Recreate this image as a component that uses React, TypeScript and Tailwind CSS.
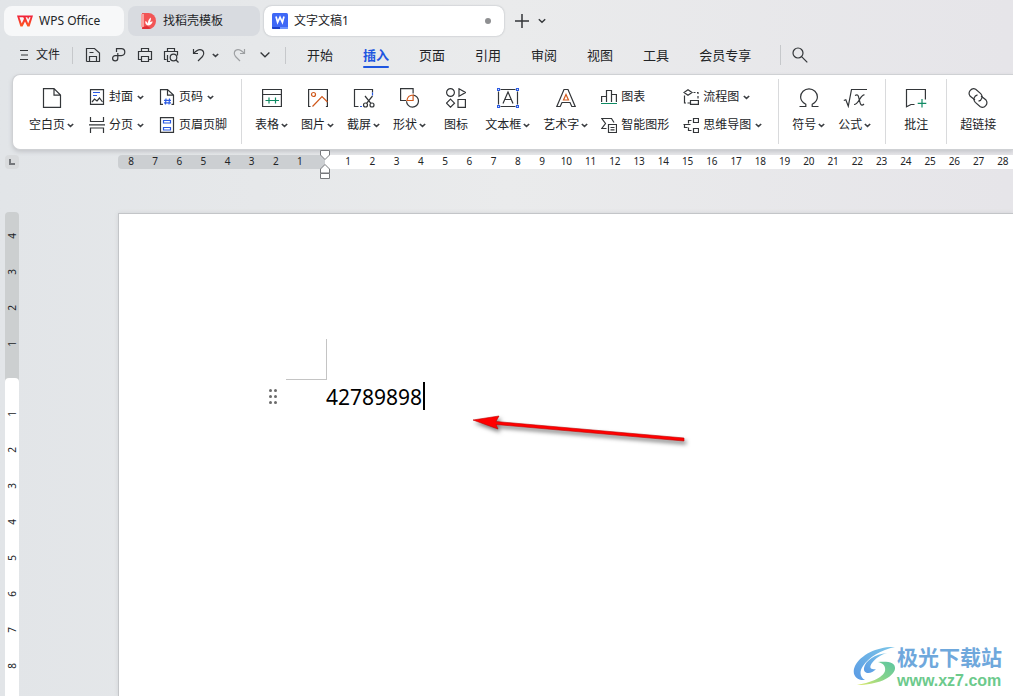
import type { ReactNode } from 'react'

const INK = '#333639'
const BLUE = '#2b5be3'
const GREEN = '#0f8a63'
const ORANGE = '#d0591c'

interface IconProps {
  w?: number
  h?: number
  children: ReactNode
}

// line icons share one stroke setup, drawn on the pixel grid
function Icon({ w = 20, h = 20, children }: IconProps) {
  return (
    <svg width={w} height={h} viewBox={`0 0 ${w} ${h}`} fill="none" stroke={INK} strokeWidth="1.2" className="shrink-0" aria-hidden="true">
      {children}
    </svg>
  )
}

function Caret() {
  return (
    <svg width="7" height="6" viewBox="0 0 7 6" fill="none" stroke="#3c3f43" strokeWidth="1.600" className="shrink-0" aria-hidden="true">
      <path d="M.8 2l2.700 2.400L6.200 2" />
    </svg>
  )
}

function BigButton({ label, icon, menu = false, className = '' }: { label: string; icon: ReactNode; menu?: boolean; className?: string }) {
  return (
    <button className={`flex shrink-0 flex-col items-center gap-2 pt-3 ${className}`}>
      <span className="flex h-[22px] items-center">{icon}</span>
      <span className="flex h-4 items-center gap-0.5 whitespace-nowrap text-xs leading-4">
        {label}
        {menu && <Caret />}
      </span>
    </button>
  )
}

function SmallButton({ label, icon, menu = false }: { label: string; icon: ReactNode; menu?: boolean }) {
  return (
    <button className="flex h-4 items-center gap-1 whitespace-nowrap text-xs leading-4">
      {icon}
      {label}
      {menu && <Caret />}
    </button>
  )
}

function Stack({ children }: { children: ReactNode }) {
  return <div className="flex shrink-0 flex-col items-start gap-3 pt-3.5">{children}</div>
}

function Divider() {
  return <div className="mt-1 h-[65px] w-px shrink-0 bg-[#d9dadc]" />
}

function TabBar() {
  return (
    <header className="flex items-center gap-1 px-1 pt-1.5">
      <button className="flex h-[30px] w-[120px] shrink-0 items-center gap-1.5 rounded-lg bg-[#f7f8f9] pl-[13px] text-xs">
        <svg width="16" height="12" viewBox="0 0 16 12" aria-hidden="true">
          <defs>
            <linearGradient id="wps" x1="0" y1="0" x2="0" y2="1">
              <stop offset="0" stopColor="#f0203c" />
              <stop offset="1" stopColor="#ff5a1f" />
            </linearGradient>
          </defs>
          <path d="M0 .5h16l-3.4 11h-2.2L8 6.4l-2.4 5.1H3.4zM2.4 2.3l2.3 6.1 2.3-4.6-.8-1.5zM8.6 2.3l2.6 6.1 2.4-6.1h-1.5l-.9 2.3-1-2.3z" fill="url(#wps)" fillRule="evenodd" />
        </svg>
        WPS Office
      </button>
      <button className="flex h-[30px] w-[132px] shrink-0 items-center gap-[7px] rounded-lg bg-[#d8dbe0] pl-[13px] text-xs">
        <svg width="15" height="16" viewBox="0 0 15 16" aria-hidden="true">
          <path d="M1 0h6.5a7.5 8 0 0 1 0 16H1z" fill="#f25555" />
          <path d="M0 1h3v13H0z" fill="#f9a3a0" />
          <path d="M2 14l4-1 4 2.500-3 .5H1z" fill="#e02f36" />
          <path d="M7 12.500C4.500 11.800 4 9.800 4.400 8c1.400.7 2.200 1.700 2.400 2.800C6.800 8 7.800 5.800 9.800 4.400c.4 1.800-.2 3.500-1.100 4.800.9-.6 1.900-.8 3-.7-.5 2.200-2.200 3.900-4.700 4z" fill="#fff" />
        </svg>
        找稻壳模板
      </button>
      <div className="flex h-[30px] w-60 shrink-0 items-center gap-1.5 rounded-lg bg-white px-2 text-xs shadow-[0_0_2px_#a8acb2]">
        <svg width="16" height="16" viewBox="0 0 16 16" aria-hidden="true">
          <rect width="16" height="16" rx="1.500" fill="#3f68f6" />
          <path d="M0 14h8v2H1.500A1.500 1.500 0 0 1 0 14z" fill="#1c40c9" />
          <path d="M8 14h8a1.500 1.500 0 0 1-1.500 2H8z" fill="#6c92ff" />
          <path d="M4 3.500l1.600 5.800L8 4.200l2.400 5.100L12 3.500" fill="none" stroke="#fff" strokeWidth="1.700" />
        </svg>
        文字文稿1
        <span className="mr-[5px] ml-auto size-1.5 rounded-full bg-[#8e8f91]" />
      </div>
      <button aria-label="新建标签" className="ml-[7px]">
        <Icon w={14} h={14}><path d="M7 0v14M0 7h14" strokeWidth="1.500" /></Icon>
      </button>
      <button aria-label="标签列表" className="ml-[5px]">
        <Icon w={8} h={6}><path d="M.8 1.200L4 4.200l3.200-3" strokeWidth="1.400" /></Icon>
      </button>
    </header>
  )
}

const menus = ['开始', '插入', '页面', '引用', '审阅', '视图', '工具', '会员专享']

function MenuBar() {
  return (
    <nav className="flex h-[38px] items-center pl-5">
      <button className="flex shrink-0 items-center gap-2 text-xs">
        <Icon w={8} h={12}><path d="M0 1.500h8M1 6h7M0 10.500h8" /></Icon>
        文件
      </button>
      <div className="mx-3 h-[17px] w-px shrink-0 bg-[#c6c8cb]" />
      <div className="flex shrink-0 items-center gap-2.5">
        <button aria-label="保存">
          <Icon w={16} h={16}>
            <path d="M1.500 14.500v-13h8l5 4.500v8.500h-3M1.500 14.500h3M4.500 14.500v-5h7v5h-7M4.500 5.500h4" />
          </Icon>
        </button>
        <button aria-label="输出为PDF">
          <Icon w={16} h={16}>
            <path d="M5.500 5V1.600h4.800a3.500 3.500 0 0 1 0 7H4.200a2.600 2.600 0 1 0 2.600 2.600V6" />
          </Icon>
        </button>
        <button aria-label="打印">
          <Icon w={16} h={16}>
            <path d="M4.500 4.500v-3h7v3M4.500 12.500h-3v-8h13v8h-3M4.500 9.500h7v5h-7z" />
          </Icon>
        </button>
        <button aria-label="打印预览">
          <Icon w={16} h={16}>
            <path d="M4.500 4.500v-3h7v3M3.500 12.500h-2v-8h13v4M4.500 8v6.500H7" />
            <circle cx="10.500" cy="10.500" r="3.300" />
            <path d="M13 13l2.500 2.500" />
          </Icon>
        </button>
        <button aria-label="撤销" className="flex items-center gap-1.5 pl-[3px]">
          <Icon w={14} h={16}>
            <path d="M1.500 2v4.500h4.500M1.700 6.300C4 3.800 6 2.600 8 2.600c3.600 0 5 3.900 2.500 6.900L6 14" />
          </Icon>
          <Caret />
        </button>
        <button aria-label="恢复" className="ml-[3px] opacity-40">
          <Icon w={14} h={16}>
            <path d="M12.500 2v4.500H8M12.300 6.300C10 3.800 8 2.600 6 2.600c-3.600 0-5 3.900-2.500 6.900L8 14" />
          </Icon>
        </button>
        <button aria-label="自定义快速访问" className="ml-1">
          <Icon w={10} h={8}><path d="M.6 1.500L5 5.800l4.400-4.300" strokeWidth="1.300" /></Icon>
        </button>
      </div>
      <div className="mr-[21px] ml-[15px] h-[17px] w-px shrink-0 bg-[#c6c8cb]" />
      <div className="flex shrink-0 gap-[30px] text-[13px] leading-5">
        {menus.map((m) => (
          <button
            key={m}
            className={m === '插入' ? 'flex h-[26px] flex-col justify-between pt-[3px] font-bold text-[#1f56e0]' : 'h-[26px]'}
          >
            {m}
            {m === '插入' && <span className="h-0.5 w-full shrink-0 rounded-full bg-[#1f56e0]" />}
          </button>
        ))}
      </div>
      <div className="mr-[11px] ml-[29px] h-5 w-px shrink-0 bg-[#c6c8cb]" />
      <button aria-label="搜索">
        <Icon w={16} h={16}>
          <circle cx="6" cy="6" r="5" />
          <path d="M9.600 9.600L15.300 15.300" />
        </Icon>
      </button>
    </nav>
  )
}

function Ribbon() {
  return (
    <section className="ml-3 flex h-[76px] overflow-hidden rounded-l-lg border border-r-0 border-[#cfd1d4] bg-white shadow-[0_2px_4px_#c4c6ca]">
      <div className="flex shrink-0 gap-[15px] pr-3.5 pl-4">
        <BigButton
          label="空白页"
          menu
          icon={<Icon><path d="M1.500.6h10.500l6.500 6.500v12.300h-17zM12 .6v6.500h6.500" /></Icon>}
        />
        <Stack>
          <SmallButton
            label="封面"
            menu
            icon={
              <Icon w={16} h={16}>
                <path d="M1.500.6h13v14.800h-13z" />
                <path d="M4 3.500h7M4 6.500h4" stroke={BLUE} />
                <path d="M3 13l2.500-3L8 12l2.500-3 3 4" />
              </Icon>
            }
          />
          <SmallButton
            label="分页"
            menu
            icon={<Icon w={16} h={16}><path d="M1.500 0v4.500h13V0M1.500 16v-5h13v5M0 7.800h16" /></Icon>}
          />
        </Stack>
        <Stack>
          <SmallButton
            label="页码"
            menu
            icon={
              <Icon w={16} h={16}>
                <path d="M4 15.400H1.500V.6h7l6 5.500v9.300h-2M8.500.6v5.500h6" />
                <path d="M7 9.500l-.5 6M10.500 9.500l-.5 6M5 11.300h7M5 13.800h7" stroke={BLUE} />
              </Icon>
            }
          />
          <SmallButton
            label="页眉页脚"
            icon={
              <Icon w={16} h={16}>
                <path d="M1.500.6h13v14.800h-13z" />
                <path d="M4.500 3.500h7v2.500h-7zM4.500 10.500h7v2.500h-7z" stroke={BLUE} />
              </Icon>
            }
          />
        </Stack>
      </div>
      <Divider />
      <div className="flex shrink-0 gap-[13px] pr-4 pl-[13px]">
        <BigButton
          label="表格"
          menu
          icon={
            <Icon>
              <path d="M.6 1.500h18.800v17H.6zM.6 6.500h18.800" />
              <path d="M3.500 12.500h13.500M7 9.500v6M13.500 9.500v6" stroke={GREEN} />
            </Icon>
          }
        />
        <BigButton
          label="图片"
          menu
          icon={
            <Icon>
              <path d="M2.500 18.500H.6v-17h18.800v17h-1.500" />
              <circle cx="5.500" cy="6.500" r="2" stroke={ORANGE} />
              <path d="M4.500 18.500L14 8.500l5.500 5.500" stroke={ORANGE} />
            </Icon>
          }
        />
        <BigButton
          label="截屏"
          menu
          icon={
            <Icon w={22}>
              <path d="M5.500 18.500H1.500v-17h18v3" />
              <path d="M19.500 4.500v3M7 18.500h2" stroke={BLUE} />
              <circle cx="12.500" cy="17" r="2" />
              <circle cx="19" cy="17" r="2" />
              <path d="M12 8l5.900 7.300M19.500 8l-5.900 7.300" />
            </Icon>
          }
        />
        <BigButton
          label="形状"
          menu
          icon={
            <Icon>
              <path d="M6 12.500H.6V.6h12.500v4.900" />
              <path d="M13.100 7.100a6 6 0 1 1-6.600 6.200" />
              <path d="M6.900 12.500a6.500 6.500 0 0 1 6.200-5.500v5.500z" stroke={ORANGE} />
            </Icon>
          }
        />
        <BigButton
          label="图标"
          className="pr-1 pl-[5px]"
          icon={
            <Icon>
              <circle cx="4.500" cy="4.500" r="3.900" />
              <path d="M13 .8v7.400l6.500-3.700zM4.500 11.200l4 4-4 4-4-4zM12 11.500h7.400v7.900H12z" />
            </Icon>
          }
        />
        <BigButton
          label="文本框"
          menu
          icon={
            <Icon w={22} h={20}>
              <path d="M3.500 1.500h15M3.500 18.500h15M1.500 3.500v13M20.500 3.500v13" />
              <path d="M6 15.500L11 4l5 11.500M7.700 11.500h6.600" />
              <path d="M.5.500h2v2h-2zM19.500.500h2v2h-2zM.5 17.500h2v2h-2zM19.500 17.500h2v2h-2z" fill="#fff" stroke={BLUE} />
            </Icon>
          }
        />
        <BigButton
          label="艺术字"
          menu
          icon={
            <Icon>
              <path d="M.8 18.500L8 1.500h4l7.200 17h-3.400L14 14.500H6l-1.800 4z" />
              <path d="M10 6.500l2.500 5.500h-5z" stroke={ORANGE} />
            </Icon>
          }
        />
        <div className="flex shrink-0 gap-3.5">
          <Stack>
            <SmallButton
              label="图表"
              icon={
                <Icon w={16} h={16}>
                  <path d="M.6 13V7.500h4.900M5.500 13V1.500h5V13M10.500 5.500h4.900V13" />
                  <path d="M0 14.500h16" stroke={GREEN} />
                </Icon>
              }
            />
            <SmallButton
              label="智能图形"
              icon={
                <Icon w={16} h={16}>
                  <path d="M5.500 11.500H.8l3.700-5-3.700-5h9.700l2.500 4M7.500 7.500h8v8h-8zM9.500 10.500h4M9.500 12.800h4" />
                </Icon>
              }
            />
          </Stack>
          <Stack>
            <SmallButton
              label="流程图"
              menu
              icon={
                <Icon w={16} h={16}>
                  <path d="M5 .8l4 2.700-4 2.700-4-2.700zM10.500 3.500h2M14 3.500h1v1.500M15 7v2.500M1.500 6.500v7.500H3M4.500 14H7M7.500 11.500h7.900v3.900H7.500z" />
                </Icon>
              }
            />
            <SmallButton
              label="思维导图"
              menu
              icon={
                <Icon w={16} h={16}>
                  <path d="M10.500 1.500h5v4h-5zM10.500 11.500h5v4h-5zM8.500 3.500H5.500v3M.5 7.500h7M1.500 7.500v3h3M5.500 10.500v3h3" />
                </Icon>
              }
            />
          </Stack>
        </div>
      </div>
      <Divider />
      <div className="flex shrink-0 gap-[13px] pr-3.5 pl-[13px]">
        <BigButton
          label="符号"
          menu
          icon={
            <Icon>
              <path d="M.5 18.500h6.300v-2.200C3.500 14.500 1.600 12 1.600 9a8.400 8.200 0 0 1 16.800 0c0 3-1.900 5.500-5.200 7.300v2.200h6.300" />
            </Icon>
          }
        />
        <BigButton
          label="公式"
          menu
          icon={
            <Icon w={24}>
              <path d="M.8 12.500l2-.8 2.500 6.500L8.500 1.500H24" />
              <path d="M12 7.500c3.500-1.800 3.500 1 4.300 4.300.8 3.700 1.500 7.200 4.700 4.200M21.500 7c-4-.8-5.500 9.500-10.500 9.500" />
            </Icon>
          }
        />
      </div>
      <Divider />
      <div className="flex shrink-0 px-[18px]">
        <BigButton
          label="批注"
          icon={
            <Icon w={22}>
              <path d="M9.500 16.500H6l-4.500 2.300V1.500h18.900v10" />
              <path d="M17 11v8.500M12.700 15.300h8.600" stroke={GREEN} />
            </Icon>
          }
        />
      </div>
      <Divider />
      <div className="flex shrink-0 px-[13px]">
        <BigButton
          label="超链接"
          icon={
            <Icon>
              <path d="M7 12L2 8A4.600 4.600 0 0 1 7.700 1.200l5 4.400a4.500 4.500 0 0 1-2.200 7.600" />
              <path d="M13 8l5 4a4.600 4.600 0 0 1-5.700 6.800l-5-4.400a4.500 4.500 0 0 1 2.200-7.600" />
            </Icon>
          }
        />
      </div>
    </section>
  )
}

const beforeMargin = [8, 7, 6, 5, 4, 3, 2, 1]
const afterMargin = Array.from({ length: 28 }, (_, i) => i + 1)

function HorizontalRuler() {
  return (
    <div className="flex items-center pt-[5px] pl-[5px] text-[10px] leading-3">
      <button aria-label="制表符" className="flex size-3.5 shrink-0 items-center justify-center rounded-sm bg-[#d9dbdd]">
        <span className="size-1.5 border-b-2 border-l-2 border-[#74777b]" />
      </button>
      <div className="relative ml-[99px] grid h-3.5 w-[207px] shrink-0 grid-cols-8 rounded-l-sm bg-[#cccfd2] pr-[13px] pl-px text-center">
        {beforeMargin.map((n) => <span key={n}>{n}</span>)}
        <svg width="12" height="30" viewBox="0 0 12 30" fill="#fff" stroke="#77797c" className="absolute -top-[5px] -right-1.5 z-10" aria-hidden="true">
          <path d="M1.500.5h9V5L6 9.500 1.500 5zM6 14.500l4.500 4.500v4h-9v-4zM1.500 23.500h9v5h-9z" />
        </svg>
      </div>
      <div className="h-3.5 min-w-0 flex-1 overflow-hidden bg-white pl-[11px]">
        <div className="grid w-[679px] grid-cols-28 text-center">
          {afterMargin.map((n) => <span key={n}>{n}</span>)}
        </div>
      </div>
    </div>
  )
}

function VerticalNumbers({ values }: { values: number[] }) {
  return (
    <>
      {values.map((n) => (
        <span key={n} className="flex h-9 w-3.5 items-center justify-center">
          <span className="-rotate-90">{n}</span>
        </span>
      ))}
    </>
  )
}

function VerticalRuler() {
  return (
    <div className="-mt-px flex w-3.5 shrink-0 flex-col rounded-t-sm bg-[#cccfd0] text-[10px] leading-3">
      <div className="h-[166px] pt-1.5">
        <VerticalNumbers values={[4, 3, 2, 1]} />
      </div>
      <div className="flex-1 rounded-t-sm bg-white pt-[18px]">
        <VerticalNumbers values={[1, 2, 3, 4, 5, 6, 7, 8]} />
      </div>
    </div>
  )
}

function Page() {
  return (
    <main className="relative ml-[99px] min-w-0 flex-1 border-t border-l border-[#c3c5c8] bg-white pt-[125px] shadow-[0_0_4px_#d0d2d5]">
      <div className="ml-[167px] size-[41px] border-r border-b border-[#c4c4c4]" />
      <div className="ml-[150px] flex h-[30px] items-center pt-0.5">
        <div className="grid grid-cols-2 gap-x-0.5 gap-y-[3px]">
          {[0, 1, 2, 3, 4, 5].map((i) => <span key={i} className="size-[3px] rounded-full bg-[#6b6b6b]" />)}
        </div>
        <p className="mr-px ml-[49px] pt-0.5 text-[21px] leading-7 text-black">42789898</p>
        <span className="h-7 w-0.5 bg-black" />
      </div>
      <svg width="230" height="50" viewBox="0 0 230 50" className="absolute top-[196px] left-[347px] drop-shadow-[2px_3px_2px_#00000088]" aria-hidden="true">
        <path d="M7 10L33 6l-3 5.500 188 16.500v3L30 14.500l2 4.500z" fill="#f00" stroke="#c00000" strokeWidth=".6" />
      </svg>
    </main>
  )
}

function Watermark() {
  return (
    <a href="#xz7" className="absolute right-[11px] bottom-1.5 flex items-center">
      <svg width="44" height="42" viewBox="0 0 44 42" aria-hidden="true">
        <defs>
          <linearGradient id="swirl-blue" x1="0" y1="1" x2="1" y2="0">
            <stop offset="0" stopColor="#5a9ae4" />
            <stop offset="1" stopColor="#7cc6e8" />
          </linearGradient>
          <linearGradient id="swirl-green" x1="0" y1="1" x2="1" y2="0">
            <stop offset="0" stopColor="#dfe96a" />
            <stop offset=".5" stopColor="#86d48c" />
            <stop offset="1" stopColor="#5cc5a0" />
          </linearGradient>
        </defs>
        <path d="M42 2C26 1 8 9 2 21c-4 9 2 15 10 14-5-3-6-8-2-14C16 12 28 5 42 2z" fill="url(#swirl-blue)" />
        <path d="M34 8C22 9 12 16 11 23c-1 6 7 7 12 1-6 1-7-2-4-6 3-4 8-8 15-10z" fill="url(#swirl-blue)" />
        <path d="M25 17c9-1 18 0 17 7C40 33 24 40 4 40c12-2 26-7 28-14 1-5-2-8-7-9z" fill="url(#swirl-green)" />
      </svg>
      <span className="flex flex-col">
        <span className="text-[21px] leading-[30px] font-bold text-[#6fa8dc]">极光下载站</span>
        <span className="font-['Liberation_Sans',sans-serif] text-base leading-[18px] font-bold text-[#6cca8c]">www.xz7.com</span>
      </span>
    </a>
  )
}

export default function App() {
  return (
    <div className="relative flex min-h-screen flex-col overflow-hidden bg-linear-to-r from-[#e2e5e8] via-[#eaebec] to-[#e6e5e9] font-['Noto_Sans','Noto_Sans_CJK_SC',sans-serif] text-[#222427]">
      <TabBar />
      <MenuBar />
      <Ribbon />
      <HorizontalRuler />
      <div className="flex flex-1 pt-11 pl-[5px]">
        <VerticalRuler />
        <Page />
      </div>
      <Watermark />
    </div>
  )
}
